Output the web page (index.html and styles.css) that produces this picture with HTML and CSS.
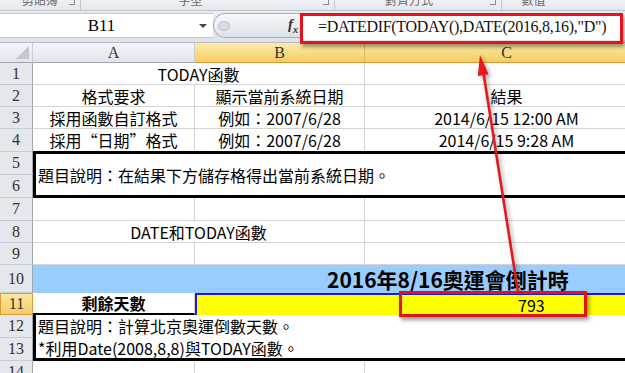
FILE: index.html
```html
<!DOCTYPE html>
<html lang="zh-Hant">

<head>
    <meta charset="UTF-8">
    <title>DATEDIF</title>

    <link rel="stylesheet" href="styles.css">
</head>

<body>

    <div class="app">

        <!-- nederste kant af båndet -->
        <div class="ribbon">
            <div class="grp g1"><span>剪貼簿</span><i class="launch"></i></div>
            <div class="grp g2"><span>字型</span><i class="launch"></i></div>
            <div class="grp g3"><span>對齊方式</span><i class="launch"></i></div>
            <div class="grp g4"><span>數值</span></div>
        </div>

        <div class="fbar">
            <div class="namebox"><span class="ref">B11</span><span class="drop"></span></div>
            <div class="grip"><span class="dot"></span><span class="fx">f<sub>x</sub></span></div>
            <div class="formula">=DATEDIF(TODAY(),DATE(2016,8,16),"D")</div>
        </div>

        <section class="sheet">
            <div class="ch corner"></div>
            <div class="ch">A</div>
            <div class="ch sel">B</div>
            <div class="ch sel">C</div>

            <div class="rh">1</div>
            <div class="c span2">TODAY函數</div>
            <div class="c"></div>

            <div class="rh">2</div>
            <div class="c">格式要求</div>
            <div class="c">顯示當前系統日期</div>
            <div class="c">結果</div>

            <div class="rh">3</div>
            <div class="c">採用函數自訂格式</div>
            <div class="c">例如：2007/6/28</div>
            <div class="c">2014/6/15 12:00 AM</div>

            <div class="rh">4</div>
            <div class="c">採用“日期”格式</div>
            <div class="c">例如：2007/6/28</div>
            <div class="c">2014/6/15 9:28 AM</div>

            <div class="rh">5</div>
            <div class="c span3 tall box1">題目說明：在結果下方儲存格得出當前系統日期。</div>
            <div class="rh">6</div>

            <div class="rh">7</div>
            <div class="c"></div>
            <div class="c"></div>
            <div class="c"></div>

            <div class="rh">8</div>
            <div class="c span2">DATE和TODAY函數</div>
            <div class="c"></div>

            <div class="rh">9</div>
            <div class="c"></div>
            <div class="c"></div>
            <div class="c"></div>

            <div class="rh">10</div>
            <div class="c span3 title">2016年8/16奧運會倒計時</div>

            <div class="rh sel">11</div>
            <div class="c label">剩餘天數</div>
            <div class="c span2 result">793</div>

            <div class="rh">12</div>
            <div class="c span3 tall box2">
                <p>題目說明：計算北京奧運倒數天數。</p>
                <p>*利用Date(2008,8,8)與TODAY函數。</p>
            </div>
            <div class="rh">13</div>

            <div class="rh">14</div>
            <div class="c"></div>
            <div class="c"></div>
            <div class="c"></div>
        </section>

        <!-- røde markeringer ovenpå -->
        <div class="mark mark-formula"></div>
        <div class="mark mark-value"></div>

        <svg class="arrow" width="625" height="373" viewBox="0 0 625 373">
            <line x1="518" y1="292" x2="483" y2="70" stroke="#e3191f" stroke-width="2.6" />
            <polygon points="480,55 477.8,76 488.6,74.3" fill="#e3191f" />
        </svg>

    </div>

</body>

</html>
```

FILE: styles.css
```css
body {
    margin: 0;
}

.app {
    position: relative;
    width: 625px;
    height: 373px;
    overflow: hidden;
    background: #fff;
    font-family: "Noto Sans CJK TC", sans-serif;
}

.ribbon {
    display: flex;
    height: 10px;
    background: linear-gradient(#eef1f5, #e4e8ed);
    border-bottom: 1px solid #bcc3cc;
    overflow: hidden;
}

.grp {
    position: relative;
    display: flex;
    justify-content: center;
    border-right: 1px solid #c3c9d1;
    font-size: 12px;
    line-height: 12px;
    color: #6a6a6a;
}

.grp span {
    margin-top: -6px;
}

.g1 {
    width: 80px;
}

.g2 {
    width: 254px;
    padding-right: 34px;
    box-sizing: border-box;
}

.g3 {
    width: 167px;
    padding-right: 18px;
    box-sizing: border-box;
}

.g4 {
    flex: 1;
    padding-right: 60px;
    border-right: none;
}

.launch {
    position: absolute;
    right: 5px;
    top: 0;
    width: 5px;
    height: 4px;
    border-right: 1px solid #8a8f96;
    border-bottom: 1px solid #8a8f96;
}

.fbar {
    display: flex;
    align-items: flex-start;
    height: 32px;
    padding-top: 2px;
    box-sizing: border-box;
    background: linear-gradient(#e9ecf0, #dfe3e8);
    border-bottom: 1px solid #b5bcc6;
}

.namebox {
    display: flex;
    align-items: center;
    width: 213px;
    height: 25px;
    background: #fff;
    border-top: 1px solid #c3c9d1;
    border-bottom: 1px solid #c3c9d1;
    box-sizing: border-box;
    font-family: "Liberation Serif", serif;
    font-size: 17px;
}

.ref {
    flex: 1;
    text-align: center;
    padding-left: 4px;
}

.drop {
    width: 0;
    height: 0;
    margin-right: 6px;
    border-left: 4px solid transparent;
    border-right: 4px solid transparent;
    border-top: 4px solid #444;
}

.grip {
    display: flex;
    align-items: center;
    justify-content: space-between;
    width: 87px;
    height: 25px;
    padding: 0 2px 0 4px;
    box-sizing: border-box;
    border: 1px solid #a9b0ba;
    border-right: none;
    border-radius: 13px 0 0 13px;
    background: linear-gradient(#f8f9fb, #dde1e6);
}

.dot {
    width: 10px;
    height: 8px;
    border-radius: 50%;
    background: #d8dce2;
    border: 1px solid #bfc4cb;
}

.fx {
    font-family: "Liberation Serif", serif;
    font-style: italic;
    font-weight: bold;
    font-size: 15px;
    color: #333;
}

.fx sub {
    font-size: 10px;
}

.formula {
    flex: 1;
    display: flex;
    align-items: center;
    height: 27px;
    padding-left: 18px;
    background: #fff;
    font-family: "Liberation Serif", serif;
    font-size: 16px;
    letter-spacing: -0.3px;
    color: #111;
}

.sheet {
    display: grid;
    grid-template-columns: 33px 162px 170px 284px;
    grid-template-rows: 20px 22px 22px 22px 23px 23px 23px 23px 22px 22px 28px 22px 23px 23px 22px;
}

.ch,
.rh {
    display: flex;
    align-items: center;
    justify-content: center;
    box-sizing: border-box;
    font-family: "Liberation Serif", serif;
    font-size: 16px;
    color: #333;
}

.ch {
    background: linear-gradient(#f2f4f7, #e2e6eb);
    border-right: 1px solid #c8cdd4;
    border-bottom: 1px solid #9ea6b0;
}

.ch.sel {
    background: linear-gradient(#fdeba9, #f5cd62);
    border-right-color: #e9b85c;
    border-bottom-color: #e09a3a;
}

.corner {
    position: relative;
}

.corner::after {
    content: "";
    position: absolute;
    right: 3px;
    bottom: 3px;
    width: 13px;
    height: 13px;
    background: #c3c8ce;
    clip-path: polygon(100% 0, 100% 100%, 0 100%);
}

.rh {
    grid-column: 1;
    background: #e4e7eb;
    border-right: 1px solid #9ea6b0;
    border-bottom: 1px solid #c8cdd4;
}

.rh.sel {
    background: linear-gradient(#fde7a0, #f5cd62);
    border: 1px solid #e09a3a;
}

.c {
    display: flex;
    align-items: center;
    justify-content: center;
    box-sizing: border-box;
    border-right: 1px solid #d4d4d4;
    border-bottom: 1px solid #d4d4d4;
    font-size: 16px;
    white-space: nowrap;
    color: #000;
}

.span2 {
    grid-column: span 2;
}

.span3 {
    grid-column: span 3;
}

.tall {
    grid-row: span 2;
}

.box1 {
    justify-content: flex-start;
    margin-top: -1px;
    padding-left: 2px;
    border: 3px solid #000;
    border-right: none;
}

.title {
    justify-content: flex-start;
    padding-left: 294px;
    background: #99ccff;
    border-color: #99ccff;
    font-size: 21px;
    font-weight: bold;
}

.label {
    font-weight: bold;
    border-bottom: 2px solid #000;
}

.result {
    justify-content: flex-start;
    padding-left: 321px;
    background: #ffff00;
    border: none;
    border-top: 2px solid #1a1adf;
    border-left: 2px solid #1a1adf;
}

.box2 {
    display: block;
    padding-left: 2px;
    border: 3px solid #000;
    border-top: none;
    border-right: none;
}

.box2 p {
    margin: 0;
    line-height: 22px;
}

.mark {
    position: absolute;
    box-sizing: border-box;
    border: 3px solid #e3121b;
    box-shadow: 2px 3px 4px rgba(0, 0, 0, 0.4);
}

.mark-formula {
    left: 300px;
    top: 13px;
    width: 323px;
    height: 31px;
}

.mark-value {
    left: 399px;
    top: 291px;
    width: 188px;
    height: 26px;
}

.arrow {
    position: absolute;
    left: 0;
    top: 0;
    pointer-events: none;
    filter: drop-shadow(2px 2px 2px rgba(0, 0, 0, 0.35));
}
```
